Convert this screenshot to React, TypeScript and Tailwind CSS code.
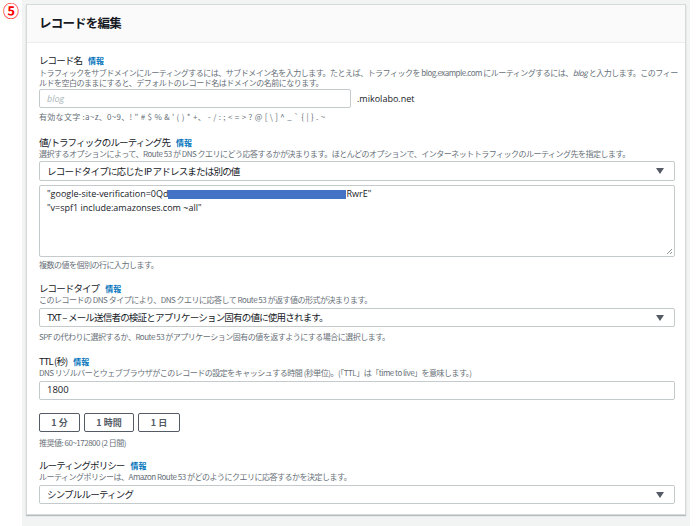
import { ReactNode } from 'react';

const FONT = { fontFamily: '"Noto Sans CJK JP", "Open Sans", sans-serif' };
const LATIN = { fontFamily: '"Open Sans", "Noto Sans CJK JP", sans-serif' };

function Info() {
  return <span className="ml-[6px] text-[8px] font-bold tracking-normal text-[#0073bb]">情報</span>;
}

function Label({ children }: { children: ReactNode }) {
  return (
    <div className="text-[9.5px] leading-[13px] tracking-[-0.9px] text-[#16191f]">
      {children}
      <Info />
    </div>
  );
}

function Desc({ children, className = '', tight = true }: { children: ReactNode; className?: string; tight?: boolean }) {
  return (
    <div
      className={`text-[8px] leading-[10px] text-[#687078] whitespace-nowrap ${tight ? 'tracking-[-0.5px]' : 'tracking-[0.3px]'} ${className}`}
    >
      {children}
    </div>
  );
}

function Select({ value, className = '' }: { value: string; className?: string }) {
  return (
    <div
      className={`flex h-[19px] items-center justify-between border border-[#c5cbcc] rounded-[2px] bg-white pl-[7px] pr-[10px] text-[9.5px] tracking-[-0.8px] text-[#16191f] ${className}`}
    >
      <span className="whitespace-pre">{value}</span>
      <svg width="8" height="6" viewBox="0 0 8 6">
        <path d="M0 0h8L4 6z" fill="#545b64" />
      </svg>
    </div>
  );
}

export default function App() {
  return (
    <div className="relative w-[696px] h-[526px] bg-white overflow-hidden" style={FONT}>
      <span className="absolute left-[3px] top-[1px] text-[16px] leading-[18px] font-bold text-[#ff0000]">⑤</span>
      <div className="ml-[22px] mr-[6px] h-full bg-[#f2f3f3] pt-[4px] px-[4px]">
        <div className="bg-white border border-[#d5dbdb] shadow-[0_1px_1px_rgba(0,28,36,0.25)]">
          <div className="h-[38px] bg-[#fafafa] border-b border-[#eaeded] flex items-center px-[12px]">
            <h2 className="text-[12.5px] font-bold tracking-[-0.8px] text-[#16191f]">レコードを編集</h2>
          </div>

          <div className="px-[12px] pr-[10px] pt-[11px] pb-[10px]">
            {/* record name */}
            <Label>レコード名</Label>
            <Desc className="mt-[1px]">
              トラフィックをサブドメインにルーティングするには、サブドメイン名を入力します。たとえば、トラフィックを blog.example.com にルーティングするには、<i>blog</i> と入力します。このフィー
              <br />
              ルドを空白のままにすると、デフォルトのレコード名はドメインの名前になります。
            </Desc>
            <div className="mt-[1px] flex items-center">
              <div
                className="w-[312px] h-[19px] border border-[#c5cbcc] rounded-[2px] flex items-center pl-[7px] text-[9px] italic text-[#aab7b8]"
                style={LATIN}
              >
                blog
              </div>
              <span className="ml-[6px] text-[9px] text-[#16191f]" style={LATIN}>
                .mikolabo.net
              </span>
            </div>
            <Desc className="mt-[4px]" tight={false}>
              有効な文字 :a~z、0~9、! &quot; # $ % &amp; &apos; ( ) * +、 - / : ; &lt; = &gt; ? @ [ \ ] ^ _ ` {'{'} | {'}'} . ~
            </Desc>

            {/* value */}
            <div className="mt-[14px]">
              <Label>値/トラフィックのルーティング先</Label>
            </div>
            <Desc>
              選択するオプションによって、Route 53 が DNS クエリにどう応答するかが決まります。ほとんどのオプションで、インターネットトラフィックのルーティング先を指定します。
            </Desc>
            <Select className="mt-[2px] h-[20px]" value="レコードタイプに応じた IP アドレスまたは別の値" />
            <div
              className="relative mt-[4px] h-[72px] border border-[#c5cbcc] rounded-[2px] pl-[7px] pt-[1px] text-[9px] leading-[14px] text-[#16191f]"
              style={LATIN}
            >
              <div className="flex items-center">
                <span>&quot;google-site-verification=0Qd</span>
                <span className="inline-block w-[178px] h-[9px] bg-[#4472c4]" />
                <span>RwrE&quot;</span>
              </div>
              <div>&quot;v=spf1 include:amazonses.com ~all&quot;</div>
              <svg className="absolute right-[1px] bottom-[1px]" width="7" height="7" viewBox="0 0 7 7">
                <path d="M6 1L1 6M6 4L4 6" stroke="#8d9696" strokeWidth="1" />
              </svg>
            </div>
            <Desc className="mt-[3px]">複数の値を個別の行に入力します。</Desc>

            {/* record type */}
            <div className="mt-[12px]">
              <Label>レコードタイプ</Label>
            </div>
            <Desc>このレコードの DNS タイプにより、DNS クエリに応答して Route 53 が返す値の形式が決まります。</Desc>
            <Select className="mt-[3px]" value="TXT – メール送信者の検証とアプリケーション固有の値に使用されます。" />
            <Desc className="mt-[5px]">
              SPF の代わりに選択するか、Route 53 がアプリケーション固有の値を返すようにする場合に選択します。
            </Desc>

            {/* TTL */}
            <div className="mt-[13px]">
              <Label>TTL (秒)</Label>
            </div>
            <Desc>
              DNS リゾルバーとウェブブラウザがこのレコードの設定をキャッシュする時間 (秒単位)。(「TTL」は「time to live」を意味します。)
            </Desc>
            <div
              className="mt-[3px] h-[19px] border border-[#c5cbcc] rounded-[2px] flex items-center pl-[7px] text-[9.5px] text-[#16191f]"
              style={LATIN}
            >
              1800
            </div>
            <div className="mt-[13px] flex gap-[4px]">
              {[
                { t: '1 分', w: 'w-[41px]' },
                { t: '1 時間', w: 'w-[50px]' },
                { t: '1 日', w: 'w-[42px]' },
              ].map((b) => (
                <button
                  key={b.t}
                  className={`${b.w} h-[19px] border border-[#545b64] rounded-[2px] bg-white text-[9px] font-bold text-[#545b64]`}
                >
                  {b.t}
                </button>
              ))}
            </div>
            <Desc className="mt-[6px]">推奨値: 60~172800 (2 日間)</Desc>

            {/* routing policy */}
            <div className="mt-[11px]">
              <Label>ルーティングポリシー</Label>
            </div>
            <Desc>ルーティングポリシーは、Amazon Route 53 がどのようにクエリに応答するかを決定します。</Desc>
            <Select className="mt-[3px]" value="シンプルルーティング" />
          </div>
        </div>
      </div>
    </div>
  );
}
